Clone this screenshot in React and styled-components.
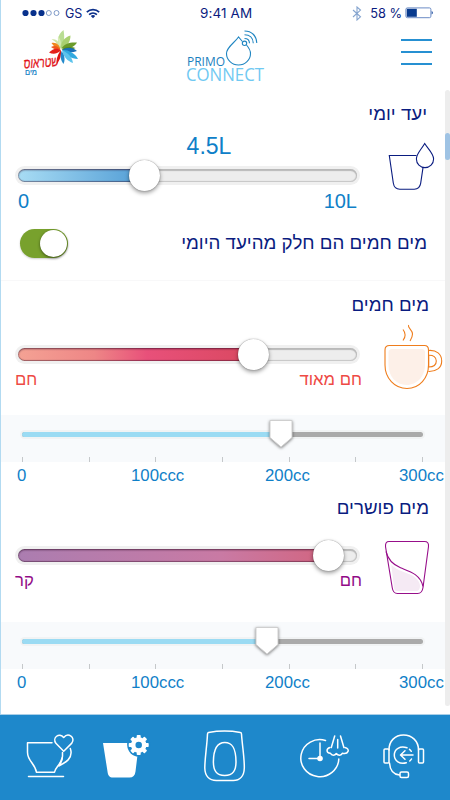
import styled, { createGlobalStyle } from 'styled-components';

const NAVY = '#0a1c80';
const BLUE = '#0f80c8';

const ticks = [0, 1, 2, 3, 4, 5, 6];
const teeth = [0, 45, 90, 135, 180, 225, 270, 315];

const App = () => {
  return (
    <>
      <GlobalStyle />
      <Phone>
        <Screen>
          <StatusBar>
            <StatusSide>
              <SignalDots />
              <Carrier>GS</Carrier>
              <WifiIcon />
            </StatusSide>
            <Clock>9:41 AM</Clock>
            <StatusSide $end>
              <BluetoothIcon />
              <Percent>58 %</Percent>
              <BatteryIcon />
            </StatusSide>
          </StatusBar>
          <Header>
            <StraussLogo />
            <PrimoLogo />
            <MenuButton aria-label="menu">
              <MenuLine />
              <MenuLine />
              <MenuLine />
            </MenuButton>
          </Header>
          <Main>
            <Content>
              <Section $height={191} $top={12} $line>
                <Title>יעד יומי</Title>
                <Row>
                  <SliderColumn>
                    <Value>4.5L</Value>
                    <Slider value={129} fill="linear-gradient(90deg, #a8dcf4, #4f9bd4)" />
                    <NumberLabels>
                      <span>0</span>
                      <span>10L</span>
                    </NumberLabels>
                  </SliderColumn>
                  <GlassIcon />
                </Row>
                <ToggleRow>
                  <Toggle>
                    <Knob />
                  </Toggle>
                  <ToggleText>מים חמים הם חלק מהיעד היומי</ToggleText>
                </ToggleRow>
              </Section>

              <Section $height={207} $top={12}>
                <Title $right={16}>מים חמים</Title>
                <Row $height={98}>
                  <SliderColumn $top={28}>
                    <Slider
                      value={238.5}
                      fill="linear-gradient(90deg, #f4a294, #ee8686 32%, #e8507a 54%, #d9485f)"
                    />
                    <HebrewLabels $color="#ee4a45">
                      <span>חם</span>
                      <span>חם מאוד</span>
                    </HebrewLabels>
                  </SliderColumn>
                  <CupIcon />
                </Row>
                <Scale value={259} />
              </Section>

              <Section $height={226} $top={8}>
                <Title $right={16}>מים פושרים</Title>
                <Row $height={102}>
                  <SliderColumn $top={26}>
                    <Slider value={313} fill="linear-gradient(90deg, #ab7db0, #c97aa4 65%, #d2647f)" />
                    <HebrewLabels $color="#920b87">
                      <span>קר</span>
                      <span>חם</span>
                    </HebrewLabels>
                  </SliderColumn>
                  <TumblerIcon />
                </Row>
                <Scale value={245} />
              </Section>
            </Content>
            <Scrollbar>
              <ScrollThumb />
            </Scrollbar>
          </Main>
        </Screen>
        <BottomNav />
      </Phone>
    </>
  );
};

export default App;

const Slider = ({ value, fill }) => (
  <Track>
    <Groove>
      <Fill style={{ width: value, background: fill }} />
    </Groove>
    <Thumb style={{ left: value - 15.5 }} />
  </Track>
);

const Scale = ({ value }) => (
  <>
    <ScalePanel>
      <ScaleTrack>
        <ScaleFill style={{ width: value }} />
        <Marker style={{ left: value - 13.5 }} viewBox="0 0 26 34">
          <path d="M2 2.5h22v17l-11 9.500-11-9.500z" fill="#fff" stroke="#cfcfcf" strokeWidth="1" />
        </Marker>
      </ScaleTrack>
      <Ticks>
        {ticks.map((tick) => (
          <Tick key={tick} />
        ))}
      </Ticks>
    </ScalePanel>
    <ScaleLabels>
      <span>0</span>
      <span>100ccc</span>
      <span>200cc</span>
      <span>300cc</span>
    </ScaleLabels>
  </>
);

const SignalDots = () => (
  <svg width="40" height="8" viewBox="0 0 40 8">
    <g fill="#08318c">
      <circle cx="4.500" cy="4" r="3.100" />
      <circle cx="12.500" cy="4" r="3.100" />
      <circle cx="20.500" cy="4" r="3.100" />
    </g>
    <g fill="none" stroke="#5f82ba" strokeWidth="0.8">
      <circle cx="27.800" cy="4" r="2.500" />
      <circle cx="35.500" cy="4" r="2.500" />
    </g>
  </svg>
);

const WifiIcon = () => (
  <svg width="14" height="11" viewBox="0 0 14 11">
    <g fill="none" stroke="#0b2f8a" strokeWidth="1.7">
      <path d="M0.8 4.2a9 9 0 0 1 12.4 0" />
      <path d="M3.1 6.6a5.7 5.7 0 0 1 7.8 0" />
    </g>
    <path d="M7 10.2L4.8 8.1a3.2 3.2 0 0 1 4.4 0z" fill="#0b2f8a" />
  </svg>
);

const BluetoothIcon = () => (
  <svg width="10" height="15" viewBox="0 0 10 15">
    <path d="M1 4l7.5 6.8L5 14V1l3.5 3.1L1 11" fill="none" stroke="#86a5cf" strokeWidth="1.1" />
  </svg>
);

const BatteryIcon = () => (
  <svg width="29" height="12" viewBox="0 0 29 12">
    <rect x="0.9" y="0.9" width="25" height="9.8" rx="1.5" fill="#fff" stroke="#5b7fc0" strokeWidth="0.9" />
    <rect x="1.8" y="1.8" width="10" height="8" fill="#083a8e" />
    <path d="M26.6 4c1.8 0.6 1.8 3 0 3.6z" fill="#2c58a5" />
  </svg>
);

const StraussLogo = () => (
  <svg width="70" height="54" viewBox="15 28 70 54">
    <g>
      <path d="M61 49c-5-6-4-14 2.500-19c1.500 8 .5 14-2.500 19z" fill="#b9dd93" />
      <path d="M60 49c-3-6-5-8-8.500-9.500c5-1.500 8 2 8.500 9.500z" fill="#cfe6a5" />
      <path d="M59.500 48c-1-5-2-9-1.500-12c3 4 4 8 1.500 12z" fill="#d8ebb4" />
      <path d="M61 48.500c0-7 3-11 9.500-13c0 6-3 11-9.500 13z" fill="#a9d070" />
      <path d="M61.500 48.500c3-5 8-6.500 15.500-6c-3 5-9 7-15.500 6z" fill="#6b9b2a" />
      <path d="M61.500 49.500c5-3 10-3 14-1.500c-5 2.500-9 3-14 1.500z" fill="#4f8720" />
      <path d="M60.500 49.500c-5-1-7-4-9-6.500c5-1 8 2 9 6.500z" fill="#f0871e" />
      <path d="M60.500 50c-4 0-7-1-9.500-3c4-2.500 8-.5 9.500 3z" fill="#ee5a1c" />
      <path d="M61 50.500c-5 4-8 4-12 2c4-4 8-5 12-2z" fill="#e4211b" />
      <path d="M61 50c.5 7-1.500 10-4 14c-1-5 1-10 4-14z" fill="#dc1414" />
      <path d="M62 50c5-3 10-3 15 1c-5 2-10 2-15-1z" fill="#1a6fb8" />
      <path d="M62 50c6-.5 13 3 16 9c-7 0-12-4-16-9z" fill="#31a9e0" />
      <path d="M62 50.500c6 2 10 6.500 11 12.500c-6-2-9-6-11-12.500z" fill="#5cc3ec" />
      <path d="M61.500 51c3 4 4 8 2 13c-3-4-3.500-8-2-13z" fill="#2389cb" />
    </g>
    <RedLogoText x="24" y="68.500" textLength="35" lengthAdjust="spacingAndGlyphs" transform="rotate(-4 24 68)">
      שטראוס
    </RedLogoText>
    <BlueLogoText x="25" y="75" textLength="12" lengthAdjust="spacingAndGlyphs">
      מים
    </BlueLogoText>
  </svg>
);

const PrimoLogo = () => (
  <PrimoSvg width="90" height="60" viewBox="180 28 90 60">
    <g fill="none" stroke="#2086c2" strokeWidth="1.1">
      <path d="M242.4 41.5L238.500 37C234.500 43 226.500 47 226.500 53.500a12 11.500 0 0 0 24 0c0-3-1.700-5.800-4-8.500" />
      <circle cx="244.500" cy="43.300" r="2.200" />
      <path d="M244.500 38.500c3 0 4.900 1.800 5 4.800" />
      <path d="M244.500 34.700c5.200 0 8.600 3.300 8.800 8.500" />
      <path d="M244.500 31c7.200 0 12 4.700 12.300 12" />
    </g>
    <PrimoText x="187" y="66" textLength="38" lengthAdjust="spacingAndGlyphs">PRIMO</PrimoText>
    <ConnectText x="186" y="81" textLength="78" lengthAdjust="spacingAndGlyphs">CONNECT</ConnectText>
  </PrimoSvg>
);

const GlassIcon = () => (
  <svg width="64" height="90" viewBox="380 126 64 90">
    <g fill="none" stroke={NAVY} strokeWidth="1.1">
      <path d="M416.5 155.500H389.300l4 27.500c.6 4 2.800 6.200 6.500 6.200h14.500c3.700 0 5.800-2.200 6.400-6l2.300-15.500" />
      <path d="M424.7 143.500c-3 5.500-8.300 10-8.300 15.500a8.600 8.600 0 0 0 17.200 0c0-5.500-5.600-10-8.900-15.500z" />
    </g>
  </svg>
);

const CupIcon = () => (
  <svg width="64" height="78" viewBox="380 317 64 78">
    <path d="M392 349h29.500q3.500 0 3.500 3.500V365c0 11-8 20-18.500 20S388.500 376 388.500 365v-12.500q0-3.500 3.500-3.500z" fill="#fdf0e8" />
    <g fill="none" stroke="#ef7d1c" strokeWidth="1.1">
      <path d="M389.500 345.500h35q4 0 4 4.500v15c0 13-9 23.500-21.500 23.500S385 378 385 365v-15q0-4.500 4.500-4.500z" />
      <path d="M428.500 350.500c8-.7 13.200 3.700 13.200 10.500s-5.500 10.800-13.300 10.500" />
      <path d="M428.700 355.300c4.700-.2 7.600 1.800 7.600 5.700s-2.900 6-7.600 6z" />
      <path d="M403 329.500c2.700 3.500 2.700 7.500 0 11" />
      <path d="M408.500 325c-1 3 4 5 4 9c0 3-1.300 5-2.500 7" />
    </g>
  </svg>
);

const TumblerIcon = () => (
  <svg width="64" height="82" viewBox="380 520 64 82">
    <path d="M391.300 565c7 6 13 6.800 20 10c5 2.500 8.500 6.500 8.700 11c0 3-1.500 5-4 5h-19q-2.500 0-3-3z" fill="#f5eaf4" />
    <g fill="none" stroke="#970e8a" strokeWidth="1.100">
      <path d="M389 541.500h35.500q4.500 0 4 5l-5.500 41q-.8 6-5.500 6h-20q-4.500 0-5.300-6L385.500 546.500q-.3-5 3.500-5z" />
      <path d="M386 551.500c2 8.500 8 13.500 14.500 16.300c7 3 19.500 5.500 22.500 18.500" />
    </g>
  </svg>
);

const BottomNav = () => (
  <Nav>
    <NavIcon $gap={25} width="50" height="54" viewBox="25 729 50 54">
      <path d="M52 742.800H27.500v9.500c0 9 7.500 11 9 20h18c.5-5 5.500-6.500 7.700-14.500" />
      <path d="M70.300 748.500c3.500 10-5.500 14.500-11.500 17.500M62.500 752.500v3.500c0 4-1.200 6.500-3 9" />
      <path d="M63.700 751.300l-7.800-8c-4-5.500 3.300-11.300 7.800-5.800c4.500-5.500 12.200 0 8.100 5.600z" />
      <path d="M28.500 776.500h35" />
    </NavIcon>
    <NavIcon $gap={26} width="50" height="54" viewBox="101 729 50 54">
      <path
        d="M103 743h24.500c.3 6 3.500 10.500 10 12l-2 16.500c-.5 4-2.500 6-6 6h-16.500c-3.500 0-5-2-5.500-6z"
        fill="#fff"
        stroke="none"
      />
      <circle cx="138.700" cy="745" r="11.500" fill="#1e88cb" stroke="none" />
      <circle cx="138.700" cy="745" r="5.500" strokeWidth="4.500" />
      {teeth.map((angle) => (
        <rect
          key={angle}
          x="136.700"
          y="735"
          width="4"
          height="4"
          rx="0.8"
          fill="#fff"
          stroke="none"
          transform={`rotate(${angle} 138.7 745)`}
        />
      ))}
    </NavIcon>
    <NavIcon $gap={49} width="50" height="54" viewBox="200 729 50 54">
      <path d="M208.500 732.500c9-1.600 23-1.600 32 0q.8 0 1 1.500c.8 12 3 24 2.800 34c-.2 8-4.500 12.500-11 12.500h-17c-7 0-11.300-4.500-11.500-12.500c0-10 2.200-22 2.700-34q.1-1.300 1-1.500z" />
      <path d="M224.800 742.500c7.500 0 11 5.500 11.200 19c.1 9-3 14-11.300 14s-11.400-5-11.300-14c.2-13.500 3.900-19 11.400-19z" />
    </NavIcon>
    <NavIcon $gap={48} width="54" height="54" viewBox="298 729 54 54">
      <path d="M325.500 740.500a19 18.500 0 1 0 13.300 18.500" />
      <path d="M320 743v15.500h-11" />
      <circle cx="320" cy="758.500" r="2.800" fill="#fff" stroke="none" />
      <path d="M334.700 736l-3.400 11.500M337.700 739.500v8.500M340.500 736l3.400 11.500" />
      <path d="M330 747.500c-4 1-4 5.500.3 5.700c1.500 2.600 4.500 2.500 6 .3c2 2.500 5 2 6-.3c6 1.500 8.500-4.500 2.500-5.700" />
    </NavIcon>
    <NavIcon $gap={27} width="50" height="54" viewBox="379 729 50 54">
      <rect x="384" y="749" width="5" height="14" rx="1" />
      <rect x="418.500" y="749" width="5" height="14" rx="1" />
      <path d="M389 750c0-9 6-15 14.500-15s15 6 15 15" />
      <path d="M389.500 763c.5 7 3.500 11.500 10 12" />
      <rect x="400" y="772" width="8.500" height="5.500" rx="1.500" />
      <path d="M407 747.800c-7-2.300-12.700 1.200-12.700 7.200c0 6 5.500 9.500 12 7.700" />
      <path d="M409.800 761c.7-.6 1.300-1.200 1.700-2M409.500 749.300q1 .8 1.800 2" />
      <path d="M413 755h-12M405 750.800l-4.500 4.200 4.500 4.200" />
    </NavIcon>
  </Nav>
);

const GlobalStyle = createGlobalStyle`
  * {
    box-sizing: border-box;
  }
  body {
    margin: 0;
    background: #fff;
    font-family: 'Liberation Sans', Arial, sans-serif;
  }
  svg {
    display: block;
    flex-shrink: 0;
  }
`;

const Phone = styled.div`
  width: 450px;
  height: 800px;
  display: flex;
  flex-direction: column;
  overflow: hidden;
  background: #fff;
`;
const Screen = styled.div`
  height: 714px;
  border-left: 1px solid #b2daf1;
`;
const StatusBar = styled.div`
  height: 28px;
  padding: 0 16px 2px 20px;
  display: grid;
  grid-template-columns: 179px 55px 1fr;
  align-items: center;
  font-family: Inter, 'Liberation Sans', sans-serif;
  color: ${NAVY};
`;
const StatusSide = styled.div`
  display: flex;
  align-items: center;
  justify-content: ${(props) => (props.$end ? 'flex-end' : 'flex-start')};
`;
const Carrier = styled.span`
  width: 18px;
  margin: 0 3px 0 4px;
  font-size: 12.5px;
`;
const Clock = styled.span`
  font-size: 13.5px;
  letter-spacing: 0.1px;
  white-space: nowrap;
`;
const Percent = styled.span`
  margin: 0 3px 0 8px;
  font-size: 12.8px;
  white-space: nowrap;
`;
const Header = styled.header`
  height: 62px;
  padding: 0 18px 0 14px;
  display: flex;
`;
const PrimoSvg = styled.svg`
  margin-left: 95px;
`;
const RedLogoText = styled.text`
  font-size: 14px;
  font-style: italic;
  fill: #e2151b;
  stroke: #e2151b;
  stroke-width: 0.3px;
`;
const BlueLogoText = styled.text`
  font-size: 8px;
  fill: #1583c6;
  stroke: #1583c6;
  stroke-width: 0.2px;
`;
const PrimoText = styled.text`
  font-family: 'Open Sans', sans-serif;
  font-size: 12.5px;
  fill: #1b80be;
`;
const ConnectText = styled.text`
  font-family: 'Open Sans', sans-serif;
  font-size: 17.5px;
  fill: #70c9f2;
`;
const MenuButton = styled.button`
  width: 31px;
  height: 26px;
  margin: 10.5px 0 0 auto;
  padding: 0;
  border: 0;
  background: none;
  display: flex;
  flex-direction: column;
  justify-content: space-between;
`;
const MenuLine = styled.span`
  width: 31px;
  height: 2px;
  background: #2690d2;
`;
const Main = styled.main`
  height: 624px;
  display: flex;
`;
const Content = styled.div`
  width: 444px;
`;
const Section = styled.section`
  height: ${(props) => props.$height}px;
  padding-top: ${(props) => props.$top}px;
  border-bottom: ${(props) => (props.$line ? '1px solid #f8f8f9' : '0')};
`;
const Title = styled.h2`
  height: 24px;
  margin: 0;
  padding-right: ${(props) => props.$right || 18}px;
  direction: rtl;
  font-size: 18.7px;
  font-weight: 400;
  line-height: 24px;
  color: ${NAVY};
`;
const Row = styled.div`
  height: ${(props) => props.$height || 92}px;
  display: flex;
  justify-content: space-between;
  padding-right: 1px;
`;
const SliderColumn = styled.div`
  width: 345px;
  margin-left: 14px;
  padding-top: ${(props) => props.$top || 0}px;
`;
const Value = styled.div`
  height: 40px;
  padding-left: 43px;
  font-size: 23px;
  line-height: 40px;
  text-align: center;
  color: ${BLUE};
`;
const Track = styled.div`
  position: relative;
  height: 19px;
  padding: 3px;
  border-radius: 10px;
  background: #f0f0f0;
`;
const Groove = styled.div`
  height: 13px;
  border-radius: 7px;
  overflow: hidden;
  background: #ededed;
  box-shadow: inset 0 2px 1px #b9b9b9, inset 0 -1px 1px #c6c6c6, inset -1px 0 1px #bbb;
`;
const Fill = styled.div`
  height: 13px;
  border-radius: 7px 0 0 7px;
  box-shadow: inset 0 1px 2px rgba(40, 0, 30, 0.65), inset 0 -1px 1px rgba(40, 0, 30, 0.4);
`;
const Thumb = styled.div`
  position: absolute;
  top: -6.5px;
  width: 31px;
  height: 31px;
  border-radius: 50%;
  background: #fff;
  box-shadow: 0 0 1px rgba(0, 0, 0, 0.5), 0 2px 4px rgba(0, 0, 0, 0.4);
`;
const NumberLabels = styled.div`
  height: 33px;
  padding: 0 3px;
  display: flex;
  justify-content: space-between;
  font-size: 20px;
  line-height: 33px;
  color: ${BLUE};
`;
const HebrewLabels = styled.div`
  width: 347px;
  height: 31px;
  display: flex;
  justify-content: space-between;
  font-size: 16.7px;
  line-height: 31px;
  color: ${(props) => props.$color};
`;
const ToggleRow = styled.div`
  height: 50px;
  padding: 0 18px 0 19px;
  display: flex;
  align-items: center;
  justify-content: space-between;
`;
const Toggle = styled.div`
  width: 48px;
  height: 29px;
  padding: 1px;
  display: flex;
  justify-content: flex-end;
  border-radius: 15px;
  background: #78a12d;
  box-shadow: 0 1px 2px rgba(0, 0, 0, 0.2);
`;
const Knob = styled.div`
  width: 27px;
  height: 27px;
  border-radius: 50%;
  background: #fff;
  box-shadow: 0 1px 3px rgba(0, 0, 0, 0.5);
`;
const ToggleText = styled.span`
  direction: rtl;
  font-size: 18.7px;
  white-space: nowrap;
  color: ${NAVY};
`;
const ScalePanel = styled.div`
  height: 47px;
  padding: 17px 22px 0 21px;
  background: #f8fafc;
`;
const ScaleTrack = styled.div`
  position: relative;
  height: 5px;
  border-radius: 3px;
  background: #aaa;
  box-shadow: 0 0 0 2px #f1f3f4;
`;
const ScaleFill = styled.div`
  height: 5px;
  border-radius: 3px 0 0 3px;
  background: #9bdbf3;
`;
const Marker = styled.svg`
  position: absolute;
  top: -14px;
  width: 26px;
  height: 34px;
  filter: drop-shadow(0 1px 1.5px rgba(0, 0, 0, 0.5));
`;
const Ticks = styled.div`
  margin-top: 20px;
  display: flex;
  justify-content: space-between;
`;
const Tick = styled.span`
  width: 1px;
  height: 5px;
  background: #c5c8ca;
`;
const ScaleLabels = styled.div`
  height: 26px;
  padding: 1px 0 0 16px;
  display: grid;
  grid-template-columns: 114px 134px 134px auto;
  font-size: 16.8px;
  line-height: 26px;
  color: ${BLUE};
`;
const Scrollbar = styled.div`
  width: 5px;
  height: 616px;
  padding-top: 43px;
  border-radius: 3px;
  background: #ededed;
`;
const ScrollThumb = styled.div`
  height: 27px;
  border-radius: 3px;
  background: #9fc3e4;
`;
const Nav = styled.nav`
  height: 86px;
  padding-top: 14px;
  display: flex;
  border-top: 1px solid #a9cfe8;
  background: #1e88cb;
`;
const NavIcon = styled.svg`
  margin-left: ${(props) => props.$gap}px;
  fill: none;
  stroke: #fff;
  stroke-width: 1.5;
  stroke-linecap: round;
  stroke-linejoin: round;
`;
